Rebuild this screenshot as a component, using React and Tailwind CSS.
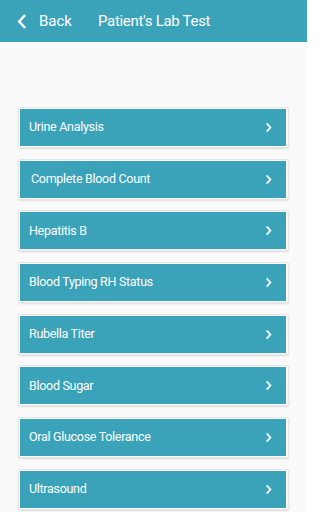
import React from 'react';

const tests = [
  { name: 'Urine Analysis' },
  { name: 'Complete Blood Count', indent: true },
  { name: 'Hepatitis B' },
  { name: 'Blood Typing RH Status' },
  { name: 'Rubella Titer' },
  { name: 'Blood Sugar' },
  { name: 'Oral Glucose Tolerance' },
  { name: 'Ultrasound' },
];

function Chevron({ className, d }) {
  return (
    <svg viewBox="0 0 10 16" className={className} fill="none" stroke="white" strokeWidth="2.6" strokeLinecap="square">
      <path d={d} />
    </svg>
  );
}

export default function App() {
  return (
    <div className="w-[307px] h-[512px] overflow-hidden bg-[#fafafa] font-['Roboto',sans-serif]">
      <div className="h-[42px] bg-[#3aa2b9] flex items-center text-white">
        <Chevron className="ml-[16px] w-[11px] h-[15px]" d="M8 2 L2.5 8 L8 14" />
        <span className="ml-[12px] text-[15px]">Back</span>
        <span className="ml-[26px] text-[15px] tracking-[-0.3px]">Patient's Lab Test</span>
      </div>
      <div className="pt-[65px] pl-[18px] pr-[18px] flex flex-col gap-[10.7px]">
        {tests.map(t => (
          <div key={t.name} className="bg-white border border-[#e6e6e6] rounded-[2px] pl-[1px] pr-[2px] py-[1px] shadow-[0_1px_2px_rgba(0,0,0,0.12)]">
            <div className="h-[37px] bg-[#3aa2b9] flex items-center justify-between text-white">
              <span className={`text-[12.5px] tracking-[-0.3px] ${t.indent ? 'pl-[11px]' : 'pl-[9px]'}`}>{t.name}</span>
              <Chevron className="mr-[13px] w-[8px] h-[11px]" d="M2.5 3 L7 8 L2.5 13" />
            </div>
          </div>
        ))}
      </div>
    </div>
  );
}
